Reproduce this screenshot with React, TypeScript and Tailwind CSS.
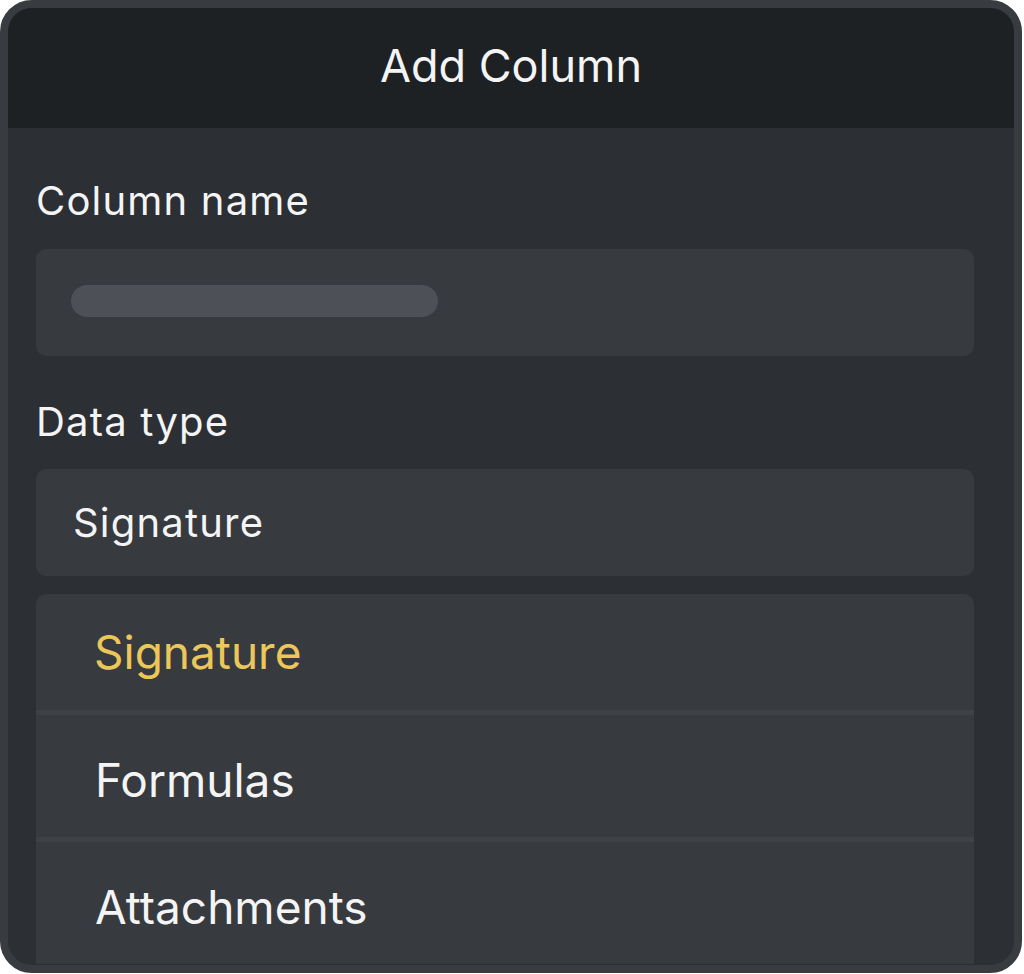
const rows = [
  { label: "Signature", active: true },
  { label: "Formulas", active: false },
  { label: "Attachments", active: false },
];

const App = () => {
  return (
    <div className="w-[1022px] h-[973px] rounded-[32px] border-8 border-[#383b40] bg-[#2c2f33] overflow-hidden flex flex-col font-['Inter','Liberation_Sans',sans-serif] text-[#f4f4f5]">
      {/* header */}
      <div className="h-[120px] shrink-0 bg-[#1e2124] flex items-center justify-center pb-[5px]">
        <h1 className="text-[45px] leading-none">Add Column</h1>
      </div>

      <div className="pl-[28px] pr-[40px]">
        <div className="mt-[48px] h-[50px] flex items-center text-[40px] leading-none tracking-[1.2px]">Column name</div>
        <div className="mt-[23px] h-[107px] rounded-[10px] bg-[#373a3f] flex items-center pl-[35px] pb-[4px]">
          <div className="w-[367px] h-[32px] rounded-full bg-[#4d5056]" />
        </div>

        <div className="mt-[41px] h-[50px] flex items-center text-[40px] leading-none tracking-[1.2px]">Data type</div>
        <div className="mt-[22px] h-[107px] rounded-[10px] bg-[#373a3f] flex items-center pl-[37px] text-[40px] leading-none tracking-[1.2px]">
          Signature
        </div>

        <div className="mt-[18px] rounded-t-[10px] bg-[#373a3f]">
          {rows.map((row, i) => (
            <div key={row.label}>
              {i > 0 && <div className="h-[5px] bg-[#3e4146]" />}
              <div
                className={
                  i === 0
                    ? "h-[116px] flex items-center pl-[58px] text-[46px] leading-none text-[#ebc75a]"
                    : "h-[122px] pt-[8px] flex items-center pl-[59px] text-[46px] leading-none"
                }
              >
                {row.label}
              </div>
            </div>
          ))}
        </div>
      </div>
    </div>
  );
};

export default App;
